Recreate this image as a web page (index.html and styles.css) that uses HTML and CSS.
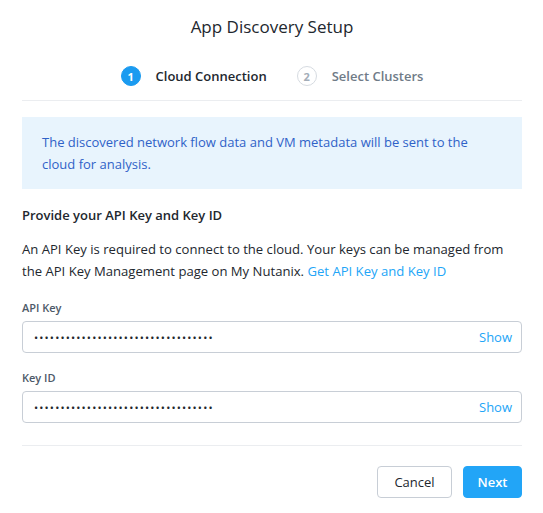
FILE: index.html
```html
<!DOCTYPE html>
<html>
<head>
<meta charset="utf-8">
<link rel="stylesheet" href="styles.css">
</head>
<body>
<div class="dialog">
  <h1 class="title">App Discovery Setup</h1>
  <div class="steps">
    <div class="step active"><span class="num">1</span><span class="label">Cloud Connection</span></div>
    <div class="step"><span class="num">2</span><span class="label">Select Clusters</span></div>
  </div>
  <div class="body">
    <div class="info">The discovered network flow data and VM metadata will be sent to the cloud for analysis.</div>
    <h2 class="subtitle">Provide your API Key and Key ID</h2>
    <p class="desc">An API Key is required to connect to the cloud. Your keys can be managed from the API Key Management page on My Nutanix. <a class="link">Get API Key and Key ID</a></p>
    <div class="field">
      <div class="field-label">API Key</div>
      <div class="input"><span class="dots">••••••••••••••••••••••••••••••••••</span><span class="show">Show</span></div>
    </div>
    <div class="field">
      <div class="field-label">Key ID</div>
      <div class="input"><span class="dots">••••••••••••••••••••••••••••••••••</span><span class="show">Show</span></div>
    </div>
  </div>
  <div class="footer">
    <button class="btn btn-secondary">Cancel</button>
    <button class="btn btn-primary">Next</button>
  </div>
</div>
</body>
</html>
```

FILE: styles.css
```css
* { box-sizing: border-box; }
html, body { margin: 0; padding: 0; background: #fff; }
body {
  font-family: "Open Sans", "Noto Sans", sans-serif;
  color: #22272e;
  font-size: 13px;
}
.dialog {
  width: 543px;
  padding: 0 21px 0 22px;
}
.title {
  margin: 0;
  padding-top: 16px;
  height: 56px;
  font-size: 17px;
  font-weight: 400;
  text-align: center;
  line-height: 22px;
}
.steps {
  display: flex;
  justify-content: center;
  gap: 30px;
  height: 45px;
  align-items: flex-start;
  padding-top: 10px;
  border-bottom: 1px solid #ebedf0;
}
.step {
  display: flex;
  align-items: center;
  gap: 15px;
}
.num {
  width: 20px;
  height: 20px;
  border-radius: 50%;
  display: flex;
  align-items: center;
  justify-content: center;
  font-size: 11px;
  font-weight: 700;
  border: 1px solid #d6dbe1;
  color: #a3adb8;
}
.step.active .num {
  background: #1b9bf0;
  border-color: #1b9bf0;
  color: #fff;
}
.label {
  font-size: 13px;
  font-weight: 600;
  color: #6f7b87;
}
.step.active .label { color: #22272e; }
.body {
  padding-top: 16px;
}
.info {
  background: #e8f4fd;
  color: #2f62c8;
  padding: 14px 20px;
  line-height: 22px;
  font-size: 13px;
  font-weight: 500;
}
.subtitle {
  margin: 16px 0 0;
  font-size: 13px;
  font-weight: 600;
  line-height: 20px;
}
.desc {
  margin: 13px 0 0;
  line-height: 22px;
  font-size: 13.1px;
}
.link { color: #22a5f7; }
.field { margin-top: 19px; }
.field + .field { margin-top: 18px; }
.field-label {
  font-size: 11px;
  font-weight: 600;
  color: #4d5968;
  line-height: 14px;
  margin-bottom: 6px;
}
.input {
  height: 32px;
  border: 1px solid #c8ced6;
  border-radius: 4px;
  display: flex;
  align-items: center;
  justify-content: space-between;
  padding: 0 9px 0 11px;
}
.dots {
  font-size: 11px;
  letter-spacing: 1.15px;
  color: #22272e;
}
.show {
  color: #22a5f7;
  font-size: 13px;
  font-weight: 500;
}
.footer {
  margin-top: 22px;
  border-top: 1px solid #ebedf0;
  padding-top: 20px;
  display: flex;
  justify-content: flex-end;
  gap: 11px;
}
.btn {
  font-family: inherit;
  font-size: 13px;
  height: 32px;
  border-radius: 4px;
  padding: 0;
  cursor: pointer;
}
.btn-secondary {
  width: 75px;
  background: #fff;
  border: 1px solid #c8ced6;
  color: #22272e;
}
.btn-primary {
  width: 59px;
  background: #22a5f7;
  border: 1px solid #22a5f7;
  color: #fff;
  font-weight: 600;
}
```
